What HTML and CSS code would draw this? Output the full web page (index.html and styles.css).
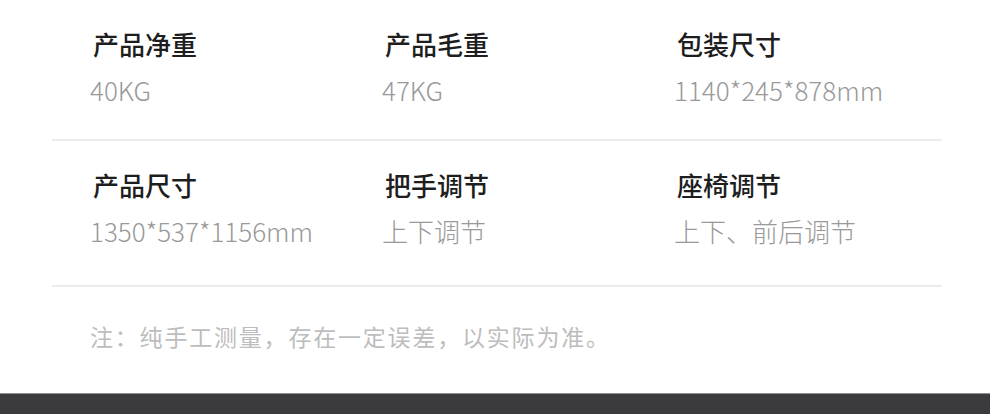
FILE: index.html
```html
<!DOCTYPE html>
<html lang="zh-CN">
<head>
    <meta charset="UTF-8">
    <meta name="viewport" content="width=device-width, initial-scale=1.0">
    <title>产品参数</title>
    <link rel="stylesheet" href="styles.css">
</head>
<body>

<div class="specs">
    <!-- 第一行 -->
    <div class="spec-row">
        <div class="spec">
            <div class="spec-label">产品净重</div>
            <div class="spec-value">40KG</div>
        </div>
        <div class="spec">
            <div class="spec-label">产品毛重</div>
            <div class="spec-value">47KG</div>
        </div>
        <div class="spec">
            <div class="spec-label">包装尺寸</div>
            <div class="spec-value">1140*245*878mm</div>
        </div>
    </div>

    <!-- 第二行 -->
    <div class="spec-row spec-row-last">
        <div class="spec">
            <div class="spec-label">产品尺寸</div>
            <div class="spec-value">1350*537*1156mm</div>
        </div>
        <div class="spec">
            <div class="spec-label">把手调节</div>
            <div class="spec-value">上下调节</div>
        </div>
        <div class="spec">
            <div class="spec-label">座椅调节</div>
            <div class="spec-value">上下、前后调节</div>
        </div>
    </div>

    <p class="note">注：纯手工测量，存在一定误差，以实际为准。</p>
</div>

<div class="footer-bar"></div>

</body>
</html>
```

FILE: styles.css
```css
body {
    margin: 0;
    min-height: 100vh;
    display: flex;
    flex-direction: column;
    background: #fff;
    font-family: "Noto Sans CJK SC", "Noto Sans", sans-serif;
}

.specs {
    margin-left: 52px;
    width: 890px;
}

.spec-row {
    display: grid;
    grid-template-columns: 292px 292px 1fr;
    padding: 27px 0 32px 38px;
    border-bottom: 2px solid #ececec;
}

.spec-row-last {
    padding-bottom: 37px;
}

.spec-label {
    font-size: 26px;
    line-height: 34px;
    font-weight: 500;
    color: #1e1e1e;
    padding-left: 3px;
}

.spec-value {
    margin-top: 12px;
    font-size: 26px;
    line-height: 34px;
    font-weight: 300;
    color: #999;
}

.note {
    margin: 34px 0 0 38px;
    font-size: 23px;
    line-height: 30px;
    letter-spacing: 1.8px;
    color: #bdbdbd;
}

.footer-bar {
    margin-top: auto;
    height: 20px;
    background: #3b3b3f;
    border-top: 1px solid #8f8f8f;
}
```
